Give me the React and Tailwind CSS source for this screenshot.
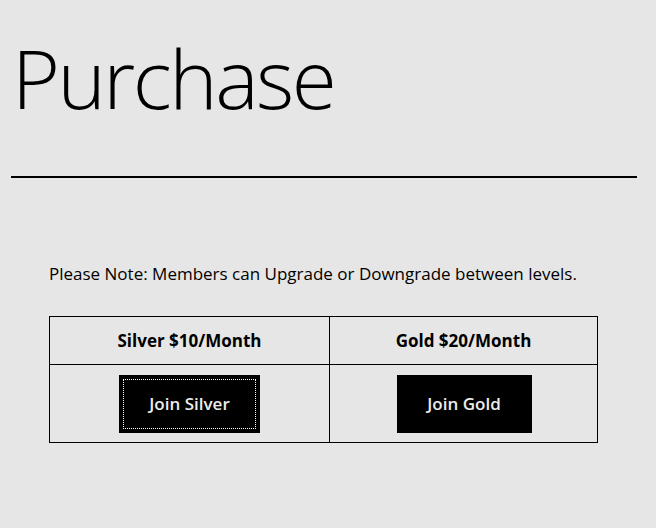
export default function App() {
  return (
    <div className="min-h-[528px] w-full bg-[#e6e6e6] text-black" style={{ fontFamily: '"Open Sans", "Noto Sans", sans-serif' }}>
      <div className="px-[11px] pt-[22px]">
        <h1 className="text-[82px] font-light leading-[110px] pl-[1px] tracking-[-2.5px]">Purchase</h1>
        <div className="mt-[44px] h-[2px] bg-black w-[626px]" />
      </div>
      <div className="pl-[49px] pt-[84px]">
        <p className="text-[17px] leading-[24px]">Please Note: Members can Upgrade or Downgrade between levels.</p>
        <div className="mt-[30px] w-[549px] border border-black grid grid-cols-[280px_1fr]">
          <div className="h-[48px] flex items-center justify-center border-r border-b border-black text-[17px] font-bold">Silver $10/Month</div>
          <div className="h-[48px] flex items-center justify-center border-b border-black text-[17px] font-bold">Gold $20/Month</div>
          <div className="h-[77px] flex items-start justify-center pt-[10px] border-r border-black">
            <button className="relative w-[141px] h-[58px] bg-black text-[#ececec] text-[17px] font-semibold">
              <span className="absolute inset-[4px] border border-dotted border-white" />
              Join Silver
            </button>
          </div>
          <div className="h-[77px] flex items-start justify-center pt-[10px] pl-[1px]">
            <button className="w-[135px] h-[58px] bg-black text-[#ececec] text-[17px] font-semibold">Join Gold</button>
          </div>
        </div>
      </div>
    </div>
  );
}
